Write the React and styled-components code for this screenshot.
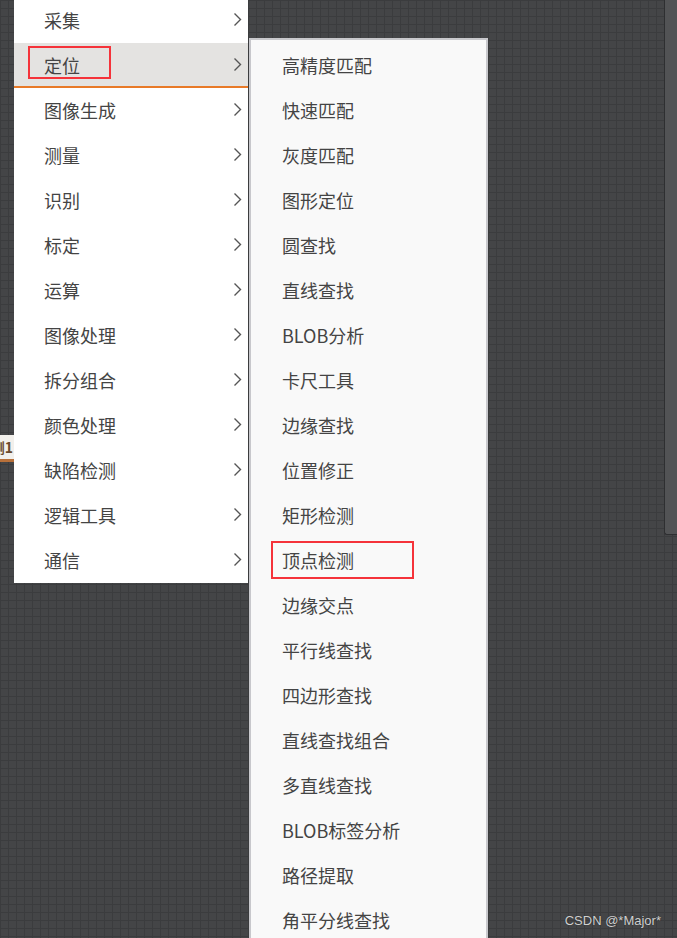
import styled, { createGlobalStyle } from "styled-components";

const GlobalStyle = createGlobalStyle`
  * { margin: 0; padding: 0; box-sizing: border-box; }
  html, body { width: 100%; height: 100%; overflow: hidden; }
  body {
    background: #434446;
    font-family: "Noto Sans CJK SC", "Noto Sans", sans-serif;
  }
`;

const mainItems = ["采集", "定位", "图像生成", "测量", "识别", "标定", "运算", "图像处理", "拆分组合", "颜色处理", "缺陷检测", "逻辑工具", "通信"];

const subItems = ["高精度匹配", "快速匹配", "灰度匹配", "图形定位", "圆查找", "直线查找", "BLOB分析", "卡尺工具", "边缘查找", "位置修正", "矩形检测", "顶点检测", "边缘交点", "平行线查找", "四边形查找", "直线查找组合", "多直线查找", "BLOB标签分析", "路径提取", "角平分线查找"];

const Canvas = styled.div`
  position: relative;
  display: flex;
  align-items: flex-start;
  width: 677px;
  height: 938px;
  overflow: hidden;
  background-color: #444547;
  background-image:
    linear-gradient(to right, #3b3c3e 1px, transparent 1px),
    linear-gradient(to bottom, #3b3c3e 1px, transparent 1px);
  background-size: 8px 8px;
`;

const Gutter = styled.div`
  position: relative;
  width: 14px;
  height: 100%;
  flex-shrink: 0;
`;

const Node = styled.div`
  position: absolute;
  left: -46px;
  top: 435px;
  width: 60px;
  height: 27px;
  background: #f2f0ec;
  border-bottom: 3px solid #b8703a;
  color: #6a4a2c;
  font-weight: 700;
  font-size: 14px;
  line-height: 24px;
  text-align: right;
  padding-right: 1px;
`;

const Menu = styled.div`
  width: 234px;
  flex-shrink: 0;
  margin-top: -2px;
  background: #ffffff;
`;

const SubMenu = styled.div`
  width: 239px;
  flex-shrink: 0;
  margin-top: 38px;
  margin-left: 1px;
  padding-top: 3px;
  background: #f9f9f9;
  border: 2px solid #c8c8cc;
  border-bottom: none;
`;

const Row = styled.div`
  position: relative;
  display: flex;
  align-items: center;
  justify-content: space-between;
  height: 45px;
  padding: 0 6px 0 ${(p) => p.$indent}px;
  font-size: 18px;
  color: #444444;
  background: ${(p) => (p.$active ? "#e4e3e1" : "transparent")};
  border-bottom: 2px solid ${(p) => (p.$active ? "#e87a28" : "transparent")};
`;

const Label = styled.span`
  position: relative;
  white-space: nowrap;
`;

const Mark = styled.span`
  position: absolute;
  left: ${(p) => p.$left}px;
  top: ${(p) => p.$top}px;
  width: ${(p) => p.$w}px;
  height: ${(p) => p.$h}px;
  border: 2px solid #f5333a;
`;

const Spacer = styled.div`
  flex: 1;
`;

const Scrollbar = styled.div`
  width: 13px;
  height: 539px;
  flex-shrink: 0;
  margin-top: -4px;
  background: #525355;
  border-left: 1px solid #2e2f31;
  border-bottom: 1px solid #2e2f31;
  border-bottom-left-radius: 3px;
`;

const Watermark = styled.div`
  position: absolute;
  right: 16px;
  bottom: 10px;
  font-family: "Liberation Sans", Arial, sans-serif;
  font-size: 13px;
  color: #d0d0d0;
  text-shadow: 0 0 1px #222;
`;

function Chevron() {
  return (
    <svg width="9" height="15" viewBox="0 0 9 15">
      <polyline points="1.5,1.5 7.5,7.5 1.5,13.5" fill="none" stroke="#555" strokeWidth="1.4" />
    </svg>
  );
}

function App() {
  return (
    <>
      <GlobalStyle />
      <Canvas>
        <Gutter>
          <Node>检测1</Node>
        </Gutter>
        <Menu>
          {mainItems.map((name) => (
            <Row key={name} $indent={30} $active={name === "定位"}>
              <Label>{name}</Label>
              <Chevron />
              {name === "定位" && <Mark $left={14} $top={3} $w={83} $h={33} />}
            </Row>
          ))}
        </Menu>
        <SubMenu>
          {subItems.map((name) => (
            <Row key={name} $indent={31}>
              <Label>{name}</Label>
              {name === "顶点检测" && <Mark $left={20} $top={3} $w={143} $h={38} />}
            </Row>
          ))}
        </SubMenu>
        <Spacer />
        <Scrollbar />
        <Watermark>CSDN @*Major*</Watermark>
      </Canvas>
    </>
  );
}

export default App;
